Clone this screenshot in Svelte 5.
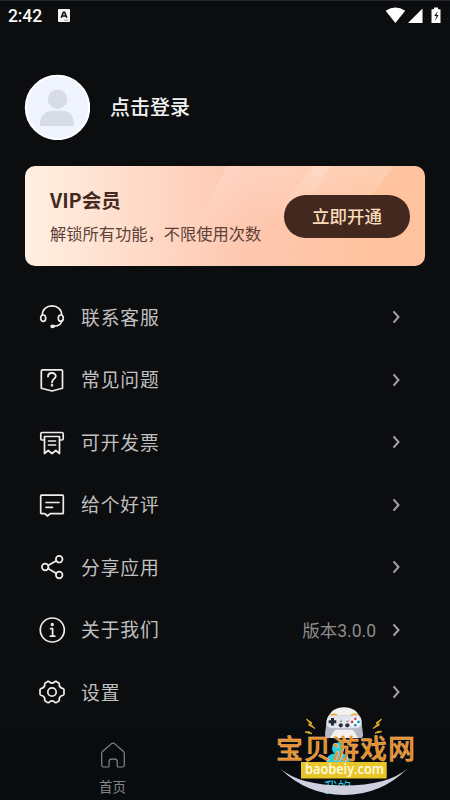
<script lang="ts">
  interface MenuItem {
    icon: string;
    label: string;
    note?: string;
  }

  const items: MenuItem[] = [
    { icon: "service", label: "联系客服" },
    { icon: "question", label: "常见问题" },
    { icon: "invoice", label: "可开发票" },
    { icon: "comment", label: "给个好评" },
    { icon: "share", label: "分享应用" },
    { icon: "about", label: "关于我们", note: "版本3.0.0" },
    { icon: "settings", label: "设置" },
  ];
</script>

<div class="screen">
  <header class="status">
    <span class="clock">2:42</span>
    <svg class="input-method" width="12" height="13" viewBox="0 0 12 13">
      <rect width="12" height="13" rx="1" fill="#f4f4f4" />
      <path d="M3.2 8.8 5.4 3.2h1.2l2.2 5.6M4.2 7h3.6" fill="none" stroke="#111" stroke-width="1.6" />
      <path d="M6 11.2h4.500" stroke="#888" stroke-width=".8" />
    </svg>
    <svg class="signals" width="58" height="18" viewBox="0 0 58 18">
      <path d="M.6 3.8Q10.500-3 20.200 3.800L10.400 16Z" fill="#fff" />
      <path d="M37.500 1.500V16H23Z" fill="#fff" />
      <path d="M49 .5h4v1.700h2.500V16h-9V2.200H49Z" fill="#fff" />
      <path d="m52.800 4-3.600 5h2.300l-1.500 5 3.600-6h-2.200Z" fill="#111" />
    </svg>
  </header>

  <section class="profile">
    <svg width="66" height="66" viewBox="0 0 66 66">
      <circle cx="33.500" cy="33.500" r="31.700" fill="#f0f4ff" stroke="#fff" stroke-width="2" />
      <circle cx="33.500" cy="25.200" r="9.700" fill="#d8dce6" />
      <path d="M16 52v-2.500C16 41 22.500 36.700 29 36.700h9c6.500 0 12 4.300 12 12.800V52Z" fill="#d8dce6" />
    </svg>
    <h1>点击登录</h1>
  </section>

  <section class="vip">
    <svg class="shine" viewBox="0 0 400 100" preserveAspectRatio="none">
      <defs>
        <linearGradient id="ray" x1="0" y1="0" x2="0" y2="1">
          <stop offset="0" stop-color="#fff" stop-opacity=".2" />
          <stop offset="1" stop-color="#fff" stop-opacity="0" />
        </linearGradient>
      </defs>
      <path d="M202 0h167L320 65H170Z" fill="url(#ray)" />
      <path d="M289 0h17L277 48H251Z" fill="url(#ray)" />
    </svg>
    <div class="vip-text">
      <h2>VIP会员</h2>
      <p>解锁所有功能，不限使用次数</p>
    </div>
    <button type="button">立即开通</button>
  </section>

  <nav class="menu">
    {#each items as item (item.icon)}
      <div class="row">
        <svg class="icon" width="28" height="28" viewBox="0 0 28 28">
          {#if item.icon === "service"}
            <path d="M4.300 12C4.300 6.300 8.500 2.900 14 2.900s9.700 3.400 9.700 9.100M23.500 17.500c0 3.500-3 5.500-7.500 5.700" />
            <ellipse cx="5.200" cy="15.200" rx="2.500" ry="3.200" />
            <ellipse cx="22.800" cy="15.200" rx="2.500" ry="3.200" />
            <ellipse class="solid" cx="14.600" cy="23.300" rx="1.500" ry="1" />
          {:else if item.icon === "question"}
            <path d="M4.800 3.800h18.400q1.300 0 1.300 1.300v17.100L14 25 3.300 22.200V5.100q0-1.300 1.500-1.300Z" />
            <path d="M10 10.500c.2-5 8.200-4.500 7.700 0C17.400 13 14 13 14 16.500" stroke-width="1.900" />
            <circle class="solid" cx="14" cy="19.300" r=".5" />
          {:else if item.icon === "invoice"}
            <path d="M6 12H4.200Q2.800 12 2.800 10.600V6q0-1.500 1.400-1.500h19.600q1.400 0 1.400 1.500v4.600q0 1.400-1.400 1.400H22M6.500 8.500v17l3.700-3 3.800 3 3.800-3 3.700 3v-17M6.500 8.500h15M10.500 13h7M10.500 17h7" />
          {:else if item.icon === "comment"}
            <path d="M3.700 4.200h20.600q1 0 1 1v16.500q0 1-1 1H12.200L9.500 25l-2.700-2.300H3.700q-1 0-1-1V5.200q0-1 1-1ZM8 11.500h13M8 16.300h6.500" />
          {:else if item.icon === "share"}
            <path d="M18.400 7.700 10 12.600M10 15.500l8.400 5" />
            <circle cx="7.200" cy="14" r="3.300" />
            <circle cx="21.200" cy="6.200" r="3.300" />
            <circle cx="21.200" cy="22" r="3.300" />
          {:else if item.icon === "about"}
            <circle cx="14.300" cy="14" r="12" />
            <circle class="solid" cx="14.300" cy="8.500" r=".8" />
            <path d="M12.600 12.700h2v7.200M12.300 20.200h4.500" />
          {:else}
            <path d="M9.700 3.400q1.200-.4 2 .8 2.300 1.700 4.600 0 .8-1.200 2-.8l2.500 1.500q1 .8.400 2.100.5 3 3.300 3.300 1.500.3 1.500 1.500v4.400q-.2 1-1.500 1.300-2.800.3-3.300 3.500.4 1.300-.4 2l-2.500 1.600q-1.200.4-2-.8-2.300-1.700-4.600 0-.8 1.200-2 .8L7.200 23q-.8-.7-.4-2-.5-3.200-3.300-3.500Q2.200 17.200 2 16.200v-4.400q.2-1.200 1.500-1.500 2.800-.3 3.300-3.300-.6-1.300.4-2.100Z" />
            <circle cx="14" cy="14" r="4.200" />
          {/if}
        </svg>
        <span class="label">{item.label}</span>
        {#if item.note}<span class="note">{item.note}</span>{/if}
        <svg class="chevron" width="10" height="16" viewBox="0 0 10 16">
          <path d="m2.500 2.400 5 5.600-5 5.600" />
        </svg>
      </div>
    {/each}
  </nav>

  <footer class="tabs">
    <div class="tab">
      <svg width="28" height="28" viewBox="0 0 28 28">
        <path d="M3.700 10.300 12.600 2.600q1.400-1 2.800 0l8.900 7.700q1 .8 1 2.200v11.700q0 1.800-1.800 1.800h-4.300q-1 0-1-1v-4.500q0-2.300-2.300-2.300h-3.500q-2.300 0-2.300 2.300V25q0 1-1 1H4.500q-1.800 0-1.800-1.800V12.500q0-1.400 1-2.200Z" fill="none" stroke="#858687" stroke-width="1.200" />
      </svg>
      <span>首页</span>
    </div>
    <div class="tab active">
      <svg width="28" height="28" viewBox="0 0 28 28">
        <circle cx="14" cy="7.500" r="6" />
        <path d="M2.500 26v-5q0-7.500 7-8.500h9q7 1 7 8.500v5Z" />
      </svg>
      <span>我的</span>
    </div>
  </footer>

  <svg class="watermark" width="160" height="100" viewBox="0 0 160 100">
    <path d="M63 20C64 11 71 7.300 79 7.300S94 11 95 20l-2 18H65Z" fill="#f3f1ef" />
    <path d="M64 15.500q-2.200 2-2.700 8L60 34q0 4.300 3.200 4.300 1.800 0 3.300-3 2.500-5.500 5-5.500h15q2.500 0 5 5.500 1.500 3 3.300 3 3.700 0 3.200-4.300l-1.300-10.500q-.5-6-2.700-8Z" fill="#b5b6c6" />
    <path d="M64.500 14.800q4-1.300 7.500.9h14q3.500-2.200 7.500-.9 4 4 3 9-1 4.500-6 4.500h-23q-5.500-.2-6-4.500 0-6 3-9Z" fill="#e3e3ec" />
    <path d="M65.500 15.200q3.500-1.800 6.500-.3M86 15.200q3.500-1.800 6.500-.3" stroke="#e9aa22" stroke-width="1.500" fill="none" />
    <path d="M67.500 18v7.500M63.700 21.700h7.600" stroke="#222b38" stroke-width="3" />
    <circle cx="75.800" cy="25.300" r="2.100" fill="#253041" />
    <circle cx="82.300" cy="25.300" r="2.100" fill="#253041" />
    <path d="M75 21.200h2M81.500 21.200h2" stroke="#6c6577" />
    <circle cx="90.300" cy="22" r="5" fill="#fff" />
    <circle cx="90.300" cy="18.800" r="1.400" fill="#d64151" />
    <circle cx="90.300" cy="25.200" r="1.400" fill="#1694bd" />
    <circle cx="87.100" cy="22" r="1.400" fill="#ca4251" />
    <circle cx="93.500" cy="22" r="1.400" fill="#1694bd" />
    <path d="m41.500 19 5.500 4-1 1.500 4 4-6.500-3.500 1.300-1.500ZM116.500 19l-5.500 4 1 1.500-4 4 6.500-3.500-1.300-1.500ZM40 32l4-.3 3 2-4-.7ZM117 31.500l-4-.3-3 2 4-.7Z" fill="#dca52c" stroke="#dca52c" />
    <path d="M15 68.500Q35 85.500 79 85.500T142.500 68.500Q116 95 79 95T15 68.500Z" fill="#cfcfdf" />
    <rect x="36" y="62" width="85.700" height="16.500" fill="#e8c629" />
    <text class="site" x="11" y="58.500">宝贝游戏网</text>
    <text class="domain" x="40" y="74.200" textLength="79" lengthAdjust="spacingAndGlyphs">baobeiy.com</text>
  </svg>
</div>

<style>
  :global(body) {
    background: #0c0d0f;
  }

  .screen {
    position: relative;
    box-sizing: border-box;
    width: 450px;
    height: 800px;
    display: flex;
    flex-direction: column;
    overflow: hidden;
    border-top: 1px solid #25272a;
    background: #0c0d0f;
    color: #c0c0c0;
    font-family: Roboto, "Noto Sans CJK SC", sans-serif;
  }

  .status {
    height: 30px;
    padding: 0 7px 0 8px;
    display: flex;
    align-items: center;
    color: #f6f6f6;
  }

  .clock {
    width: 50px;
    font-size: 17.500px;
    font-weight: 500;
    letter-spacing: -0.100px;
  }

  .input-method {
    margin-bottom: 2px;
  }

  .signals {
    margin-left: auto;
    margin-bottom: 1px;
  }

  .profile {
    height: 66px;
    padding: 43px 24px 26px;
    display: flex;
    align-items: center;
    gap: 20px;
  }

  h1,
  h2,
  p {
    margin: 0;
  }

  h1 {
    padding-top: 1px;
    color: #f4f4f4;
    font-size: 20px;
    font-weight: 500;
    line-height: 28px;
  }

  .vip {
    position: relative;
    box-sizing: border-box;
    height: 100px;
    margin: 0 25px;
    padding: 0 15px 0 25px;
    display: flex;
    align-items: center;
    justify-content: space-between;
    overflow: hidden;
    border-radius: 10px;
    background: linear-gradient(90deg, #fff0e2, #fec7b0 55%, #ffc3a0 85%, #ffc29e);
  }

  .shine {
    position: absolute;
    inset: 0;
    width: 400px;
    height: 100px;
  }

  .vip-text {
    position: relative;
    padding-top: 3px;
    color: #442920;
  }

  h2 {
    height: 34px;
    font-family: "Noto Sans CJK SC", sans-serif;
    font-size: 19.600px;
    font-weight: 700;
    line-height: 31px;
  }

  p {
    color: #5d4137;
    font-size: 16.250px;
    line-height: 34px;
    white-space: nowrap;
  }

  button {
    position: relative;
    width: 126px;
    height: 43px;
    padding: 0 0 2px;
    border: 0;
    border-radius: 22px;
    background: #432820;
    color: #f8dcb7;
    font: 500 17.500px Roboto, "Noto Sans CJK SC", sans-serif;
  }

  .menu {
    padding: 20px 49px 0 38px;
  }

  .row {
    height: 62.500px;
    display: flex;
    align-items: center;
  }

  .icon {
    fill: none;
    stroke: #ededed;
    stroke-width: 1.700;
    stroke-linecap: round;
    stroke-linejoin: round;
  }

  .icon .solid {
    fill: #ededed;
  }

  .label {
    margin-left: 15px;
    padding-bottom: 2px;
    font-size: 18.800px;
    letter-spacing: 0.900px;
  }

  .note {
    margin-left: auto;
    color: #8c8c8c;
    font-size: 17.500px;
  }

  .chevron {
    margin-left: auto;
    fill: none;
    stroke: #a3a3a6;
    stroke-width: 2;
  }

  .note + .chevron {
    margin-left: 15px;
  }

  .tabs {
    flex: 1;
    margin-top: 3px;
    display: flex;
    background: #080c0e;
  }

  .tab {
    flex: 1;
    padding-top: 14px;
    display: flex;
    flex-direction: column;
    align-items: center;
    gap: 8px;
    color: #858687;
    font-size: 13.500px;
    line-height: 20px;
  }

  .tab.active {
    color: #2bcbe3;
    fill: currentColor;
  }

  .watermark {
    position: absolute;
    left: 265px;
    top: 699px;
  }

  .site {
    fill: #e88b24;
    stroke: #f5ce9b;
    stroke-width: 0.400;
    font: 500 27px "Noto Sans CJK SC", sans-serif;
    letter-spacing: 1px;
  }

  .domain {
    fill: #fffbe2;
    font: 600 15px "Open Sans", sans-serif;
  }
</style>
